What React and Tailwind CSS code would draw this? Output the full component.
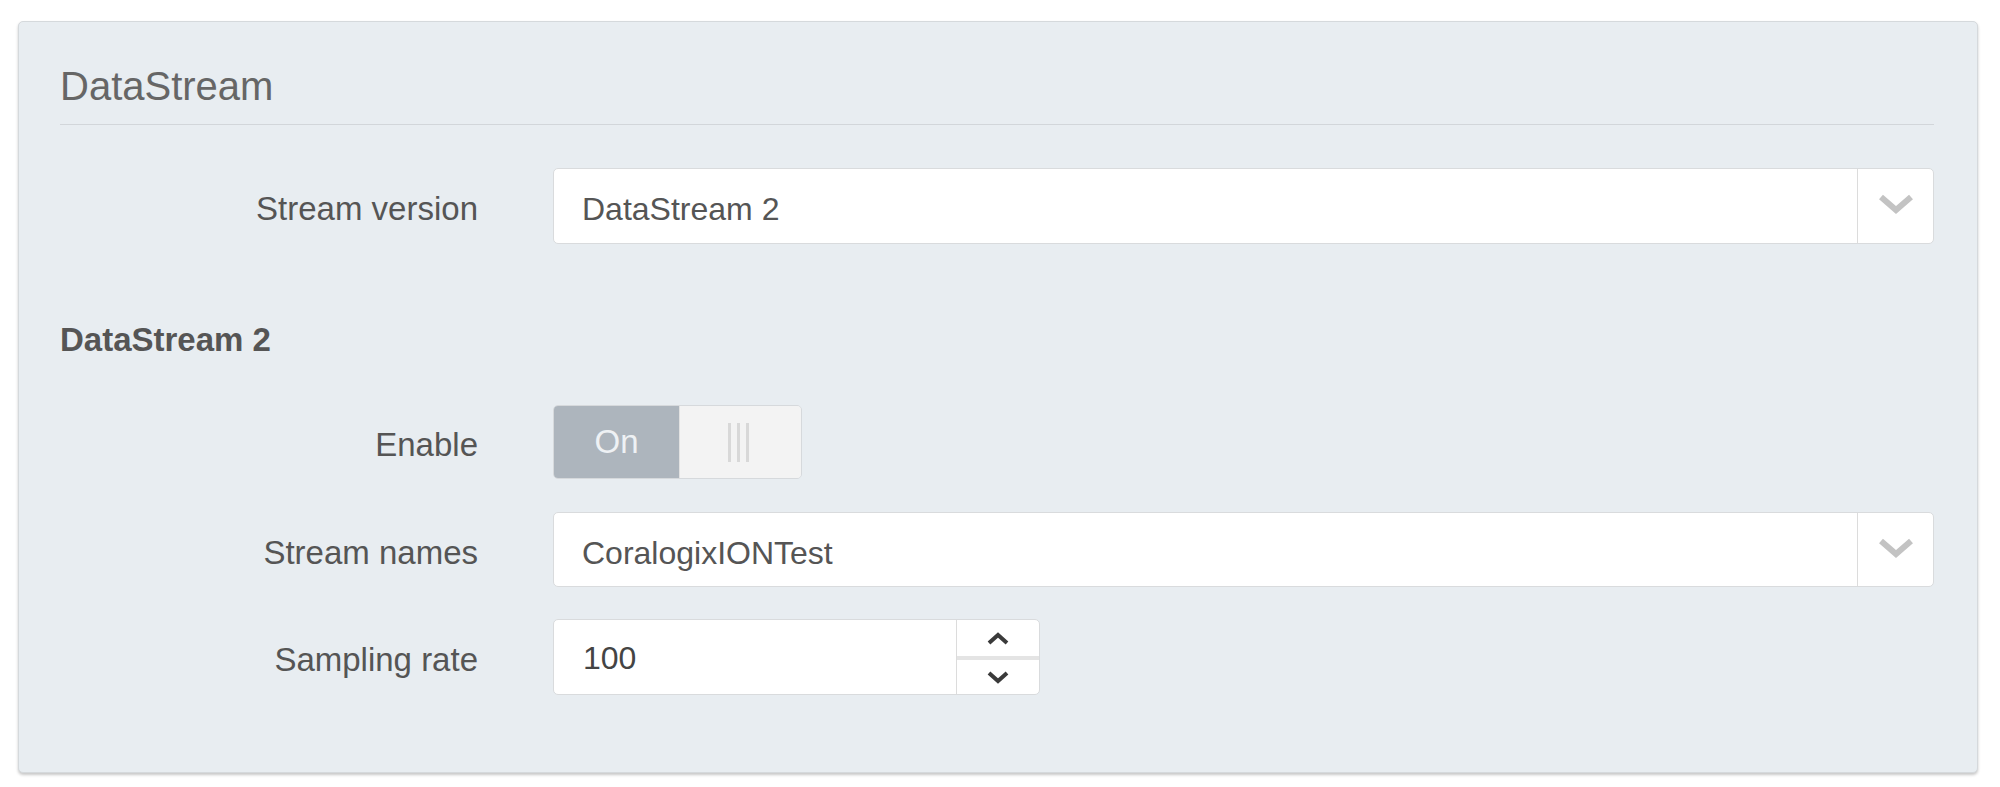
import React from "react";

const FONT = { fontFamily: '"Liberation Sans", Arial, sans-serif' };

function ChevronDownBig() {
  return (
    <svg width="36" height="20" viewBox="0 0 36 20">
      <polyline points="3,3 18,16 33,3" fill="none" stroke="#c3c3c3" strokeWidth="6" strokeLinejoin="miter" />
    </svg>
  );
}

function SmallChevron({ up }) {
  return (
    <svg width="24" height="14" viewBox="0 0 24 14">
      <polyline
        points={up ? "3,11 12,3 21,11" : "3,3 12,11 21,3"}
        fill="none"
        stroke="#3a3a3a"
        strokeWidth="4"
      />
    </svg>
  );
}

function Label({ children }) {
  return (
    <div className="w-[418px] shrink-0 text-right text-[33px] leading-[40px] text-[#555] pt-[6px]">
      {children}
    </div>
  );
}

function Select({ value }) {
  return (
    <div className="ml-[75px] flex-1 h-full flex bg-white border border-[#d9dbdd] rounded-[5px]">
      <div className="flex-1 flex items-center pl-[28px] pt-[6px] text-[32px] text-[#555]">{value}</div>
      <div className="w-[76px] border-l border-[#dcdcdc] flex items-center justify-center pb-[4px]">
        <ChevronDownBig />
      </div>
    </div>
  );
}

export default function App() {
  return (
    <div className="w-[2000px] h-[787px] bg-white pt-[21px] pl-[18px]" style={FONT}>
      <div className="w-[1960px] h-[752px] bg-[#e8edf1] border border-[#d5d9dc] rounded-[5px] shadow-[0_2px_3px_rgba(0,0,0,0.22)] pt-[42px] pl-[41px] pr-[43px]">
        <div className="text-[40px] leading-[44px] text-[#666] pb-[16px] border-b border-[#d2d6da]">
          DataStream
        </div>

        <div className="mt-[43px] h-[76px] flex items-center">
          <Label>Stream version</Label>
          <Select value="DataStream 2" />
        </div>

        <div className="mt-[76px] text-[33px] leading-[40px] font-bold text-[#555]">DataStream 2</div>

        <div className="mt-[45px] h-[74px] flex items-center">
          <Label>Enable</Label>
          <div className="ml-[75px] w-[249px] h-full flex border border-[#d6d9dc] rounded-[5px] overflow-hidden">
            <div className="w-[125px] bg-[#adb5bd] text-[#eef1f4] text-[33px] flex items-center justify-center">
              On
            </div>
            <div className="flex-1 bg-[#f3f3f3] border-l border-[#e2e2e2] flex items-center justify-center gap-[6px] pr-[4px]">
              <div className="w-[3px] h-[39px] bg-[#d8d8d8]" />
              <div className="w-[3px] h-[39px] bg-[#d8d8d8]" />
              <div className="w-[3px] h-[39px] bg-[#d8d8d8]" />
            </div>
          </div>
        </div>

        <div className="mt-[33px] h-[75px] flex items-center">
          <Label>Stream names</Label>
          <Select value="CoralogixIONTest" />
        </div>

        <div className="mt-[32px] h-[76px] flex items-center">
          <Label>Sampling rate</Label>
          <div className="ml-[75px] w-[487px] h-full flex bg-white border border-[#d9dbdd] rounded-[5px]">
            <div className="flex-1 flex items-center pl-[29px] pt-[2px] text-[32px] text-[#444]">100</div>
            <div className="w-[83px] border-l border-[#dcdcdc] flex flex-col">
              <div className="flex-1 flex items-center justify-center border-b-[4px] border-[#e4e4e4] pt-[2px]">
                <SmallChevron up />
              </div>
              <div className="flex-1 flex items-center justify-center">
                <SmallChevron />
              </div>
            </div>
          </div>
        </div>
      </div>
    </div>
  );
}
